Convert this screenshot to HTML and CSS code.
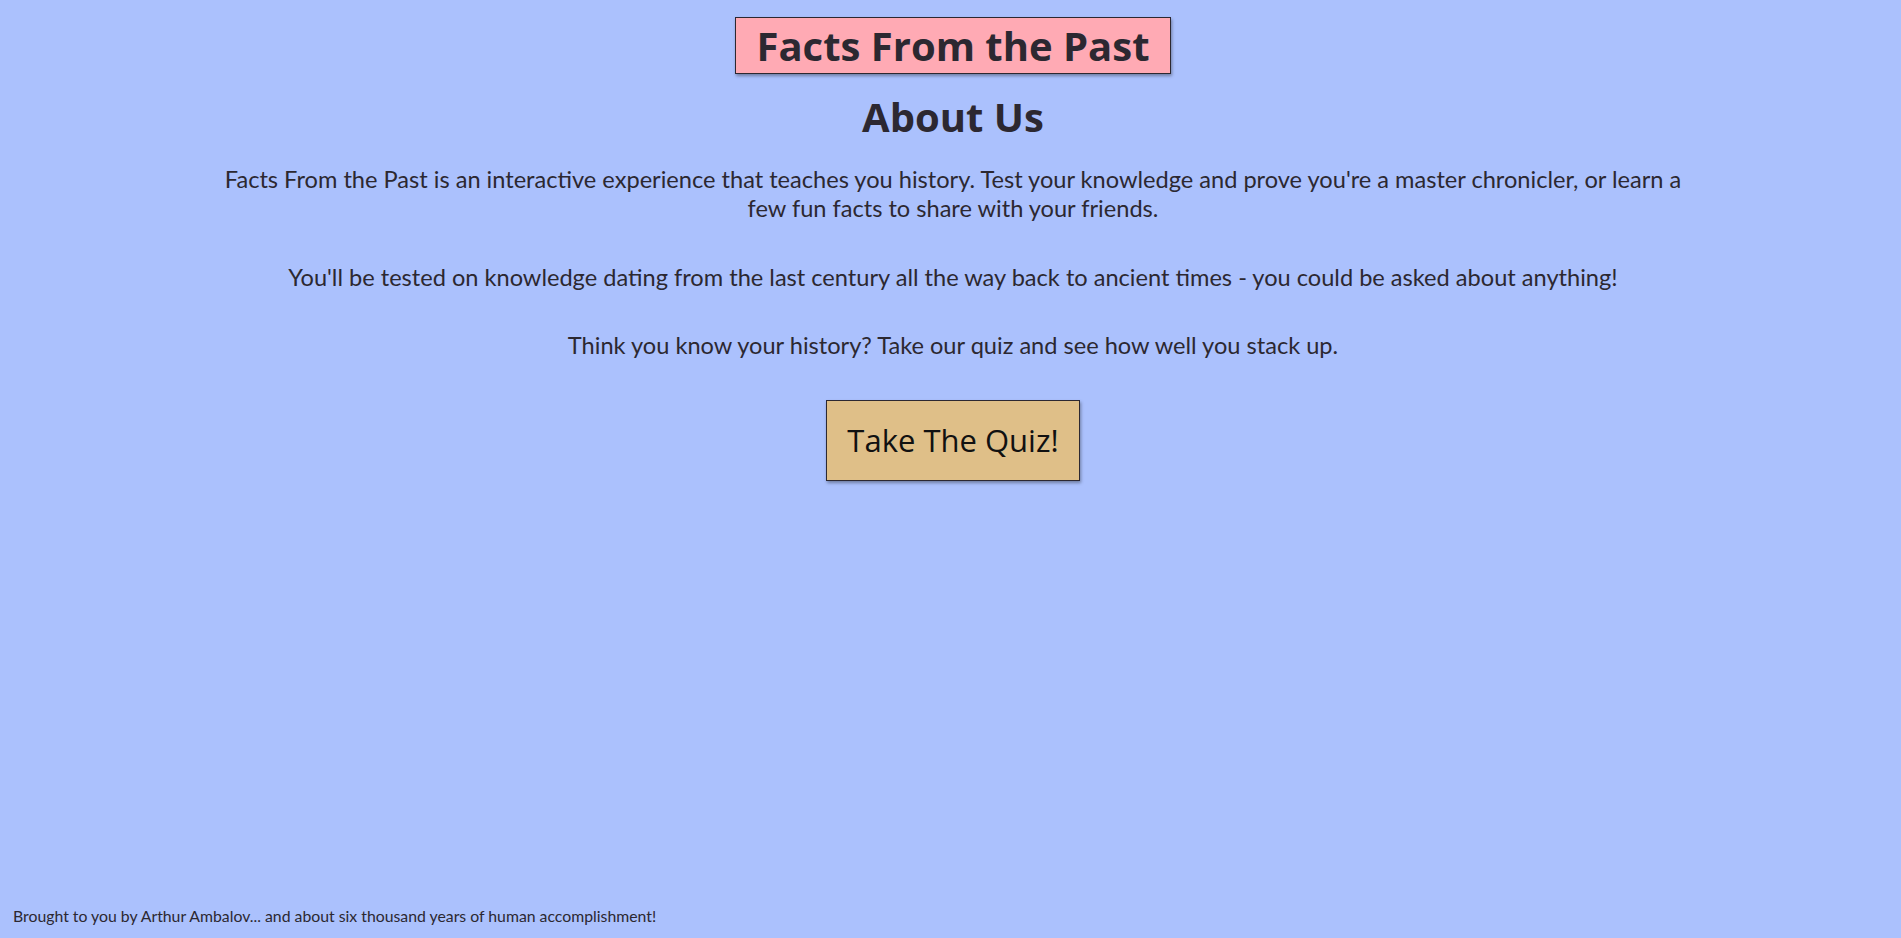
FILE: index.html
```html
<!DOCTYPE html>
<html lang="en">
<head>
<meta charset="utf-8">
<title>Facts From the Past - About Us</title>
<link rel="stylesheet" href="styles.css">
</head>
<body>
<div class="page">
  <header class="header">
    <h1 class="site-title">Facts From the Past</h1>
  </header>
  <main class="about">
    <h2 class="about-title">About Us</h2>
    <p class="about-text">Facts From the Past is an interactive experience that teaches you history. Test your knowledge and prove you're a master chronicler, or learn a few fun facts to share with your friends.</p>
    <p class="about-text">You'll be tested on knowledge dating from the last century all the way back to ancient times - you could be asked about anything!</p>
    <p class="about-text">Think you know your history? Take our quiz and see how well you stack up.</p>
    <button class="quiz-btn" type="button">Take The Quiz!</button>
  </main>
  <footer class="footer">Brought to you by Arthur Ambalov... and about six thousand years of human accomplishment!</footer>
</div>
</body>
</html>
```

FILE: styles.css
```css
html, body {
  margin: 0;
  padding: 0;
  height: 100%;
}

body {
  background: #abc1fd;
  color: #2c2831;
  font-family: "Lato", "Liberation Sans", sans-serif;
}

.page {
  min-height: 100%;
  display: flex;
  flex-direction: column;
  align-items: center;
  box-sizing: border-box;
  padding: 17px 0 0 5px;
}

.header {
  display: flex;
  justify-content: center;
}

.site-title {
  margin: 0;
  padding: 0 20px;
  background: #ffaab4;
  border: 1px solid #2c2831;
  box-shadow: 1px 2px 3px rgba(0, 0, 0, 0.35);
  font-family: "Open Sans", sans-serif;
  font-weight: 700;
  font-size: 40px;
  line-height: 55px;
  color: #2c2831;
}

.about {
  width: 1480px;
  max-width: 100%;
  display: flex;
  flex-direction: column;
  align-items: center;
  text-align: center;
}

.about-title {
  margin: 16px 0 21px;
  font-family: "Open Sans", sans-serif;
  font-weight: 700;
  font-size: 40px;
  line-height: 54px;
}

.about-text {
  margin: 0 0 40px;
  font-size: 23.6px;
  line-height: 28.8px;
}

.about-text:last-of-type {
  margin-bottom: 40px;
}

.quiz-btn {
  font-family: "Open Sans", sans-serif;
  font-size: 31px;
  line-height: 42px;
  color: #111;
  background: #dfbf88;
  border: 1px solid #2c2831;
  box-shadow: 1px 2px 3px rgba(0, 0, 0, 0.35);
  padding: 18px 20px 19px;
  cursor: pointer;
}

.footer {
  margin-top: auto;
  align-self: stretch;
  padding: 0 8px 13px;
  font-size: 15.8px;
  line-height: 19px;
}
```
